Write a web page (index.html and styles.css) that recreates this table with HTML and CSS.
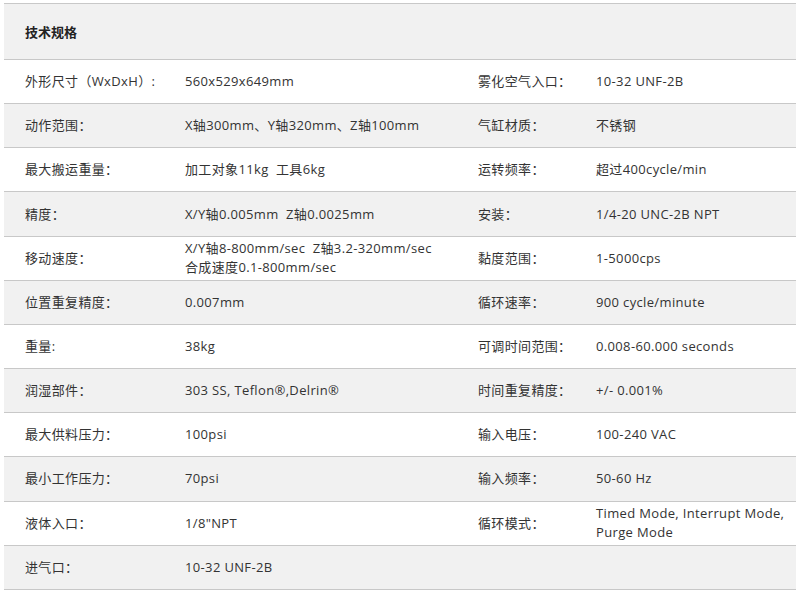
FILE: index.html
```html
<!DOCTYPE html>
<html lang="zh-CN">
<head>
<meta charset="utf-8">
<link rel="stylesheet" href="styles.css">
</head>
<body>
<table class="spec">
  <colgroup>
    <col class="c1"><col class="c2"><col class="c3"><col class="c4">
  </colgroup>
  <thead>
    <tr class="head"><th colspan="4">技术规格</th></tr>
  </thead>
  <tbody>
    <tr><td>外形尺寸（WxDxH）:</td><td>560x529x649mm</td><td>雾化空气入口：</td><td>10-32 UNF-2B</td></tr>
    <tr><td>动作范围：</td><td>X轴300mm、Y轴320mm、Z轴100mm</td><td>气缸材质：</td><td>不锈钢</td></tr>
    <tr><td>最大搬运重量：</td><td>加工对象11kg&nbsp;&nbsp;工具6kg</td><td>运转频率：</td><td>超过400cycle/min</td></tr>
    <tr><td>精度：</td><td>X/Y轴0.005mm&nbsp;&nbsp;Z轴0.0025mm</td><td>安装：</td><td>1/4-20 UNC-2B NPT</td></tr>
    <tr><td>移动速度：</td><td>X/Y轴8-800mm/sec&nbsp;&nbsp;Z轴3.2-320mm/sec<br>合成速度0.1-800mm/sec</td><td>黏度范围：</td><td>1-5000cps</td></tr>
    <tr><td>位置重复精度：</td><td>0.007mm</td><td>循环速率：</td><td>900 cycle/minute</td></tr>
    <tr><td>重量:</td><td>38kg</td><td>可调时间范围：</td><td>0.008-60.000 seconds</td></tr>
    <tr><td>润湿部件：</td><td>303 SS, Teflon®,Delrin®</td><td>时间重复精度：</td><td>+/- 0.001%</td></tr>
    <tr><td>最大供料压力：</td><td>100psi</td><td>输入电压：</td><td>100-240 VAC</td></tr>
    <tr><td>最小工作压力：</td><td>70psi</td><td>输入频率：</td><td>50-60 Hz</td></tr>
    <tr><td>液体入口：</td><td>1/8"NPT</td><td>循环模式：</td><td>Timed Mode, Interrupt Mode,<br>Purge Mode</td></tr>
    <tr><td>进气口：</td><td>10-32 UNF-2B</td><td></td><td></td></tr>
  </tbody>
</table>
</body>
</html>
```
FILE: styles.css
```css
html, body {
  margin: 0;
  padding: 0;
  background: #ffffff;
}
body {
  padding: 3px 5px 0 4px;
  font-family: "Open Sans", "Noto Sans CJK SC", sans-serif;
  font-size: 13px;
  letter-spacing: 0.35px;
  color: #333333;
}
.spec {
  width: 792px;
  border-collapse: collapse;
  table-layout: fixed;
}
.c1 { width: 160px; }
.c2 { width: 293px; }
.c3 { width: 118px; }
.c4 { width: 221px; }
.spec th,
.spec td {
  border-top: 1px solid #c8c8c8;
  border-bottom: 1px solid #c8c8c8;
  padding: 0 0 0 21px;
  text-align: left;
  vertical-align: middle;
  line-height: 19px;
  white-space: nowrap;
}
.spec td {
  height: 44.17px;
  box-sizing: border-box;
}
.spec .head th {
  height: 55px;
  font-weight: bold;
  font-family: "Noto Sans CJK SC", sans-serif;
  letter-spacing: 0;
  background: #f1f1f1;
  color: #222222;
}
.spec tbody tr:nth-child(even) td {
  background: #f1f1f1;
}
```
